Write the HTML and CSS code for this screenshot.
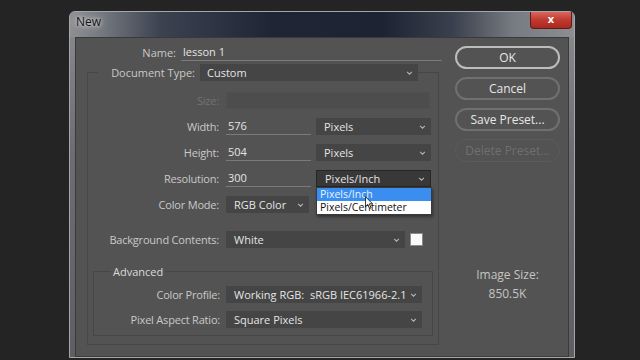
FILE: index.html
```html
<!DOCTYPE html>
<html lang="en">
<head>
  <meta charset="UTF-8">
  <meta name="viewport" content="width=device-width, initial-scale=1.0">
  <title>New</title>
  <link rel="stylesheet" href="styles.css">
</head>
<body>
  <div class="window">
    <div class="titlebar">
      <span class="title">New</span>
      <span class="close">x</span>
    </div>

    <div class="client">
      <div class="main">
        <div class="row name-row">
          <label>Name:</label>
          <div class="field name-field">lesson 1</div>
        </div>

        <fieldset class="group">
          <legend class="row doc-row">
            <label>Document Type:</label>
            <div class="select doc-select">Custom
              <svg class="chev" viewBox="0 0 8 5"><path d="M1 1l3 3 3-3"/></svg>
            </div>
          </legend>

          <div class="row first disabled">
            <label>Size:</label>
            <div class="field size-field"></div>
          </div>

          <div class="row">
            <label>Width:</label>
            <div class="field num">576</div>
            <div class="select unit">Pixels
              <svg class="chev" viewBox="0 0 8 5"><path d="M1 1l3 3 3-3"/></svg>
            </div>
          </div>

          <div class="row">
            <label>Height:</label>
            <div class="field num">504</div>
            <div class="select unit">Pixels
              <svg class="chev" viewBox="0 0 8 5"><path d="M1 1l3 3 3-3"/></svg>
            </div>
          </div>

          <div class="row">
            <label>Resolution:</label>
            <div class="field num">300</div>
            <div class="select unit open">Pixels/Inch
              <svg class="chev" viewBox="0 0 8 5"><path d="M1 1l3 3 3-3"/></svg>
              <ul class="dropdown">
                <li class="active">Pixels/Inch</li>
                <li>Pixels/Centimeter</li>
                <svg class="cursor" viewBox="0 0 10 15"><path d="M0.5 0.5v11l2.6-2.5 2 4.6 1.7-0.8-2-4.4h3.6z"/></svg>
              </ul>
            </div>
          </div>

          <div class="row">
            <label>Color Mode:</label>
            <div class="select mode-select">RGB Color
              <svg class="chev" viewBox="0 0 8 5"><path d="M1 1l3 3 3-3"/></svg>
            </div>
          </div>

          <div class="row bg-row">
            <label>Background Contents:</label>
            <div class="select bg-select">White
              <svg class="chev" viewBox="0 0 8 5"><path d="M1 1l3 3 3-3"/></svg>
            </div>
            <div class="swatch"></div>
          </div>

          <fieldset class="advanced">
            <legend>Advanced</legend>
            <div class="row first">
              <label>Color Profile:</label>
              <div class="select wide">Working RGB:&nbsp; sRGB IEC61966-2.1
                <svg class="chev" viewBox="0 0 8 5"><path d="M1 1l3 3 3-3"/></svg>
              </div>
            </div>
            <div class="row">
              <label>Pixel Aspect Ratio:</label>
              <div class="select wide">Square Pixels
                <svg class="chev" viewBox="0 0 8 5"><path d="M1 1l3 3 3-3"/></svg>
              </div>
            </div>
          </fieldset>
        </fieldset>
      </div>

      <div class="side">
        <button class="btn default">OK</button>
        <button class="btn">Cancel</button>
        <button class="btn">Save Preset...</button>
        <button class="btn" disabled>Delete Preset...</button>
        <div class="info">
          <div>Image Size:</div>
          <div>850.5K</div>
        </div>
      </div>
    </div>
  </div>
</body>
</html>
```

FILE: styles.css
```css
body {
  margin: 0;
  height: 360px;
  overflow: hidden;
  background-color: #242424;
  font-family: "Open Sans", sans-serif;
  font-size: 11px;
  color: #cfcfcf;
}

.window {
  margin: 11px 0 0 69px;
  width: 506px;
  height: 347px;
  box-sizing: border-box;
  border: 1px solid #a4a6aa;
  border-radius: 6px 6px 0 0;
  background: linear-gradient(180deg, #8a8c90, #6c6e72 40%, #5d5f63);
  display: flex;
  flex-direction: column;
}

.titlebar {
  height: 25px;
  flex: none;
  display: flex;
  justify-content: space-between;
  align-items: flex-start;
  border-radius: 5px 5px 0 0;
  background: linear-gradient(90deg, #8e9094 0%, #767a80 6%, #3c4250 18%, #1f2535 40%, #1d2333 62%, #3a404d 76%, #777b82 88%, #8c8e92 100%);
}

.title {
  padding: 3px 0 0 6px;
  line-height: 14px;
  font-size: 12px;
  color: #141414;
  text-shadow: 0 0 6px #e6e6e6, 0 0 3px #d0d0d0;
}

.close {
  width: 42px;
  height: 17px;
  margin-right: 2px;
  box-sizing: border-box;
  border: 1px solid #5e1c16;
  border-top: none;
  border-radius: 0 0 4px 4px;
  background: linear-gradient(180deg, #d8675e, #c0392e 50%, #a8291f);
  color: #fff;
  font-weight: bold;
  font-size: 11px;
  line-height: 14px;
  text-align: center;
}

.client {
  flex: none;
  height: 318px;
  margin: 0 5px;
  display: flex;
  background-color: #535353;
  border: 1px solid #3a3a3a;
}

.main {
  width: 370px;
}

.row {
  display: flex;
  align-items: center;
  height: 17px;
  margin-top: 9px;
}

.row label {
  flex: none;
  width: 131px;
  margin-right: 7px;
  text-align: right;
  color: #c9c9c9;
}

.group .row label {
  letter-spacing: -0.2px;
}

.row.first {
  margin-top: 11px;
}

.name-row {
  margin-top: 6px;
}

.name-row label {
  width: 100px;
  margin-right: 5px;
}

.field {
  box-sizing: border-box;
  height: 17px;
  line-height: 16px;
  padding-left: 2px;
  color: #e4e4e4;
  border-bottom: 1px solid #7a7a7a;
}

.name-field {
  width: 261px;
}

.num {
  width: 85px;
}

.disabled label {
  color: #727272;
}

.size-field {
  width: 204px;
  background-color: #4d4d4d;
  border: 1px solid #505050;
}

.select {
  position: relative;
  box-sizing: border-box;
  height: 17px;
  line-height: 17px;
  padding-left: 8px;
  background-color: #454545;
  color: #e4e4e4;
}

.chev {
  position: absolute;
  right: 5px;
  top: 7px;
  width: 7px;
  height: 4px;
  fill: none;
  stroke: #b4b4b4;
  stroke-width: 1.3;
}

.unit {
  width: 115px;
  margin-left: 5px;
}

.open {
  background-color: #383838;
  border: 1px solid #262626;
  line-height: 15px;
}

.open .chev {
  top: 6px;
}

.mode-select {
  width: 83px;
}

.bg-row {
  margin-top: 18px;
}

.bg-select {
  width: 179px;
}

.swatch {
  width: 13px;
  height: 13px;
  margin-left: 5px;
  background-color: #fafafa;
  border: 1px solid #8a8a8a;
  box-sizing: border-box;
}

.wide {
  width: 196px;
}

.group {
  margin: 3px 0 0 11px;
  padding: 0;
  width: 352px;
  height: 281px;
  box-sizing: border-box;
  border: 1px solid #474747;
}

.doc-row {
  margin: 0 0 0 10px;
  padding: 0;
}

.group .doc-row label {
  width: 97px;
  margin-right: 5px;
  letter-spacing: 0;
}

.doc-select {
  width: 218px;
  padding-left: 7px;
}

.advanced {
  margin: 16px 0 0 5px;
  padding: 0 0 7px;
  width: 340px;
  box-sizing: border-box;
  border: 1px solid #474747;
}

.advanced legend {
  margin-left: 17px;
  padding: 0 2px;
  line-height: 15px;
  color: #dadada;
}

.advanced .row label {
  width: 126px;
  margin-right: 6px;
}

.advanced .row.first {
  margin-top: 7px;
}

.advanced .row {
  margin-top: 8px;
}

.dropdown {
  position: absolute;
  top: 16px;
  left: -1px;
  width: 116px;
  margin: 0;
  padding: 0;
  list-style: none;
  background-color: #fff;
  border: 1px solid #3a3a3a;
  box-sizing: border-box;
  box-shadow: 1px 2px 3px rgba(0, 0, 0, 0.4);
}

.dropdown li {
  height: 13px;
  line-height: 13px;
  padding-left: 3px;
  font-size: 10.5px;
  color: #111;
}

.dropdown li.active {
  background-color: #3a8ef0;
  color: #e8f3ff;
}

.cursor {
  position: absolute;
  left: 48px;
  top: 8px;
  width: 9px;
  height: 14px;
  fill: #fff;
  stroke: #1a1a1a;
  stroke-width: 1;
}

.side {
  width: 105px;
  margin-left: 9px;
  padding-top: 8px;
  display: flex;
  flex-direction: column;
  gap: 8px;
}

.btn {
  height: 23px;
  border-radius: 12px;
  border: 2px solid #707070;
  background-color: #535353;
  color: #e6e6e6;
  font-family: "Open Sans", sans-serif;
  font-size: 12px;
  padding: 0;
}

.btn.default {
  border-color: #bcbcbc;
}

.btn:disabled {
  border: 1px solid #5b5b5b;
  color: #6f6f6f;
}

.info {
  margin-top: 95px;
  text-align: center;
  line-height: 19px;
  font-size: 12px;
  color: #c4c4c4;
}
```
